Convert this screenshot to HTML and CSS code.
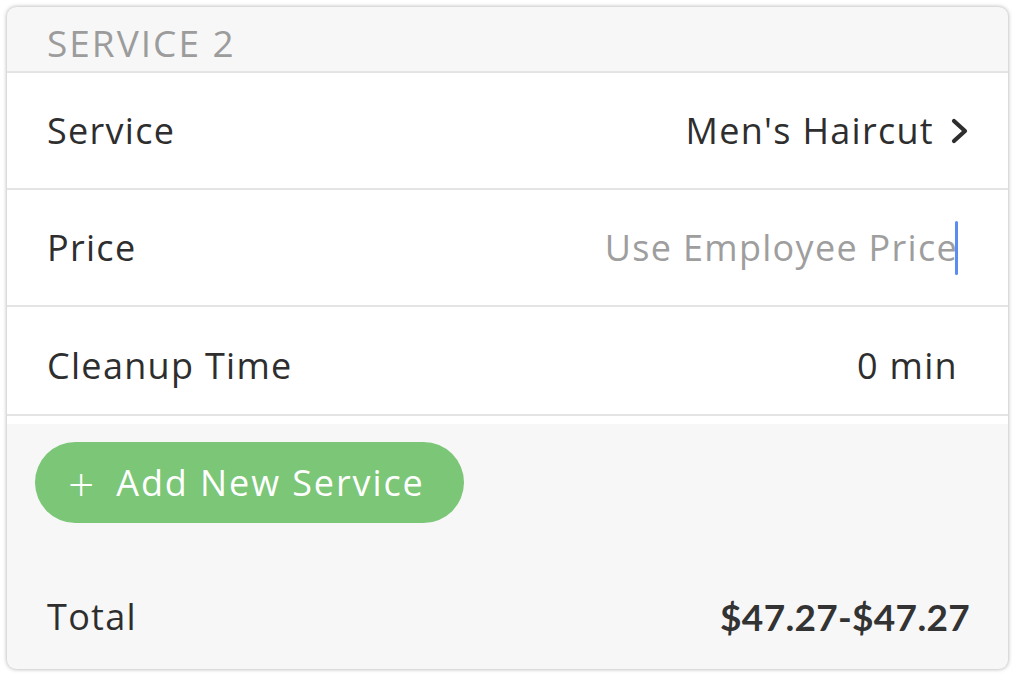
FILE: index.html
```html
<!DOCTYPE html>
<html lang="en">
<head>
    <meta charset="UTF-8">
    <meta name="viewport" content="width=device-width, initial-scale=1.0">
    <title>Service 2</title>
    <link rel="stylesheet" href="styles.css">
</head>
<body>
    <div class="card">
        <div class="card-head">SERVICE 2</div>
        <div class="list">
            <div class="row">
                <span class="label">Service</span>
                <span class="value">Men's Haircut
                    <svg class="chev" width="20" height="26" viewBox="0 0 20 26"><polyline points="4,3 15,13 4,23" fill="none" stroke="#2e2e2e" stroke-width="4.2" stroke-linecap="round" stroke-linejoin="round"/></svg>
                </span>
            </div>
            <div class="row">
                <span class="label">Price</span>
                <span class="value plain"><span class="placeholder">Use Employee Price</span><span class="caret"></span></span>
            </div>
            <div class="row last">
                <span class="label">Cleanup Time</span>
                <span class="value plain">0 min</span>
            </div>
        </div>
        <div class="foot">
            <button class="add-btn"><span class="plus">+</span>Add New Service</button>
            <div class="total">
                <span class="label">Total</span>
                <span class="price">$47.27-$47.27</span>
            </div>
        </div>
    </div>
</body>
</html>
```
FILE: styles.css
```css
body{
    margin:0;
    background:#ffffff;
    font-family:"Open Sans","Lato",sans-serif;
}
.card{
    margin:7px 8px 8px 7px;
    height:662px;
    background:#f7f7f7;
    border-radius:9px;
    box-shadow:0 0 4px rgba(0,0,0,0.35);
    overflow:hidden;
    display:flex;
    flex-direction:column;
}
.card-head{
    height:66px;
    box-sizing:border-box;
    padding-left:40px;
    font-size:37px;
    letter-spacing:2px;
    color:#9c9c9c;
    line-height:72px;
    border-bottom:2px solid #e4e4e4;
}
.list{
    background:#ffffff;
    padding-bottom:8px;
}
.row{
    height:117px;
    box-sizing:border-box;
    display:flex;
    align-items:center;
    justify-content:space-between;
    padding:0 38px 0 40px;
    border-bottom:2px solid #e4e4e4;
    font-size:36px;
    letter-spacing:1.3px;
    color:#2e2e2e;
}
.row.last{
    height:109px;
    padding-top:10px;
}
.value{
    display:flex;
    align-items:center;
}
.value.plain{
    margin-right:12px;
}
.chev{
    margin-left:16px;
}
.placeholder{
    color:#9e9e9e;
}
.caret{
    width:3px;
    height:54px;
    background:#5b8cf0;
    border-radius:2px;
    margin-left:-3px;
}
.foot{
    flex:1;
    display:flex;
    flex-direction:column;
    align-items:flex-start;
}
.add-btn{
    margin:18px 0 0 28px;
    height:81px;
    width:429px;
    border:none;
    border-radius:41px;
    background:#7bc677;
    color:#ffffff;
    font-family:"Open Sans","Lato",sans-serif;
    font-size:36px;
    letter-spacing:1.9px;
    padding:0 0 0 33px;
    text-align:left;
    display:flex;
    align-items:center;
}
.plus{
    font-weight:300;
    font-size:46px;
    margin-right:22px;
    letter-spacing:0;
}
.total{
    align-self:stretch;
    margin-top:63px;
    height:60px;
    display:flex;
    align-items:center;
    justify-content:space-between;
    padding:0 38px 0 40px;
    font-size:36px;
    letter-spacing:1.3px;
    color:#2e2e2e;
}
.price{
    font-family:"Lato",sans-serif;
    font-weight:700;
    font-size:37px;
    letter-spacing:0.3px;
    color:#333333;
}
```
